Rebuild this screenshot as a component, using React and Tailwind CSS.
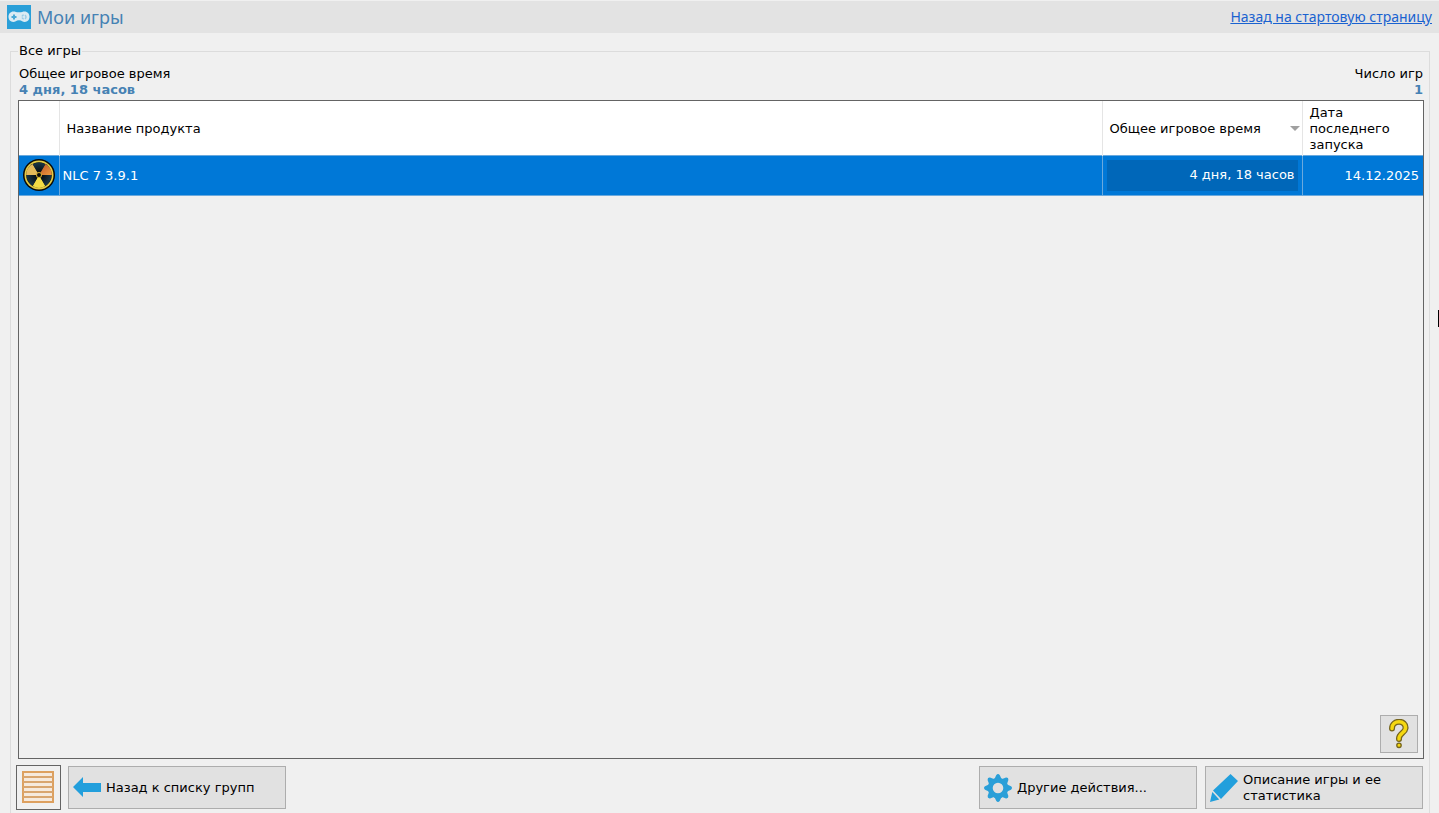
import React from 'react'

const games = [
    { id: 1, name: 'NLC 7 3.9.1', playtime: '4 дня, 18 часов', lastRun: '14.12.2025' },
]

const GamepadIcon = () => (
    <svg viewBox="0 0 24 24" className="h-6 w-6 shrink-0" aria-hidden="true">
        <rect width="24" height="24" fill="#2a9fd8" />
        <path d="M6.5 6.5c2 0 2.500.8 5.500.8s3.500-.8 5.500-.8c3 0 5 2.300 5 5.300s-2 5.200-4.700 5.200c-2.300 0-2.800-1.800-5.800-1.800s-3.500 1.800-5.800 1.800c-2.700 0-4.700-2.200-4.700-5.200s2-5.300 5-5.300z" fill="#dcebf3" />
        <path d="M7 9.500v5M4.500 12h5" stroke="#4aa9d6" strokeWidth="2" />
        <circle cx="17" cy="12" r="2" fill="none" stroke="#9ccde6" strokeWidth="1.500" strokeDasharray="2 1.100" />
    </svg>
)

const RadiationIcon = () => (
    <svg viewBox="0 0 32 32" className="mx-auto block h-8 w-8" aria-hidden="true">
        <defs>
            <radialGradient id="blade" gradientUnits="userSpaceOnUse" cx="16" cy="16" r="14">
                <stop offset="0" stopColor="#000" />
                <stop offset="1" stopColor="#1d3d50" />
            </radialGradient>
            <linearGradient id="flame" x1="0" y1="0" x2="1" y2="1">
                <stop offset="0" stopColor="#b9522a" />
                <stop offset="1" stopColor="#ee9a3c" />
            </linearGradient>
        </defs>
        <circle cx="16" cy="16" r="16" fill="#0a0a08" />
        <circle cx="16" cy="16" r="14.500" fill="#e3cb42" />
        <circle cx="16" cy="16" r="12.800" fill="#1a1a10" />
        <path d="M16 16L22.400 4.900A12.800 12.800 0 0 1 28.800 16z" fill="url(#flame)" />
        <path d="M16 16H3.200A12.800 12.800 0 0 1 9.600 4.900z" fill="#e3b95a" />
        <path d="M16 16L22.400 27.100A12.800 12.800 0 0 1 9.600 27.100z" fill="#f3dc45" />
        <path d="M16 16L9.800 5.300A12.400 12.400 0 0 1 22.200 5.300zM16 16H28.400A12.400 12.400 0 0 1 22.200 26.700zM16 16L9.800 26.700A12.400 12.400 0 0 1 3.600 16z" fill="url(#blade)" />
        <circle cx="16" cy="16" r="3" fill="#c9a52e" />
        <circle cx="16" cy="16" r="2" fill="#0a0a08" />
    </svg>
)

const ListIcon = () => (
    <svg viewBox="0 0 32 32" className="h-8 w-8" aria-hidden="true">
        <rect x="1" y="1" width="30" height="30" fill="#f6e9dc" stroke="#dda05f" strokeWidth="2" />
        <path d="M1 6h30M1 11h30M1 16h30M1 21h30M1 26h30" stroke="#d9a56e" strokeWidth="2" />
    </svg>
)

const ArrowIcon = () => (
    <svg viewBox="0 0 28 28" className="h-7 w-7 shrink-0" aria-hidden="true">
        <path d="M0 13L10 3v6h18v9H10v5z" fill="#229fdc" />
    </svg>
)

const GearIcon = () => (
    <svg viewBox="0 0 28 28" className="h-7 w-7 shrink-0" aria-hidden="true">
        <g fill="#2a9fd8">
            {[0, 45, 90, 135, 180, 225, 270, 315].map((angle) => (
                <path key={angle} d="M10 6L12.300 1Q14-1 15.700 1L18 6z" transform={`rotate(${angle} 14 14)`} />
            ))}
        </g>
        <circle cx="14" cy="14" r="7.800" fill="none" stroke="#2a9fd8" strokeWidth="5" />
    </svg>
)

const PencilIcon = () => (
    <svg viewBox="0 0 28 28" className="h-7 w-7 shrink-0" aria-hidden="true">
        <path d="M20.500 0L28 7 11 25 3 16.500zM2.300 18L9.300 25.500 0 28z" fill="#229fdc" />
    </svg>
)

const QuestionIcon = () => (
    <svg viewBox="0 0 30 30" className="h-[30px] w-[30px]" aria-hidden="true">
        <g fill="none" strokeLinecap="round" strokeLinejoin="round">
            <path d="M8 9.500C8 .5 22.500 .5 21.500 9.500C21 14 14.500 14.500 15 20" stroke="#75641c" strokeWidth="6" />
            <path d="M8 9.500C8 .5 22.500 .5 21.500 9.500C21 14 14.500 14.500 15 20" stroke="#f5d810" strokeWidth="3.500" />
        </g>
        <circle cx="15" cy="26.300" r="2.200" fill="#f5d810" stroke="#75641c" strokeWidth="1.300" />
    </svg>
)

const ActionButton = ({ icon, children }) => (
    <button type="button" className="flex h-[43px] w-[218px] items-center gap-[5px] border border-[#adadad] bg-[#e1e1e1] px-1 text-left">
        {icon}
        <span>{children}</span>
    </button>
)

export default function App() {
    return (
        <div className="relative flex h-screen flex-col overflow-hidden bg-[#f0f0f0] font-['Verdana','DejaVu_Sans',sans-serif] text-[13px] leading-4 text-black">
            <header className="flex h-[33px] shrink-0 items-center justify-between border-t border-[#f0f0f0] bg-[#e3e3e3] px-[7px] font-['Segoe_UI','Noto_Sans',sans-serif]">
                <div className="flex items-center gap-1.5">
                    <GamepadIcon />
                    <h1 className="text-[18px] leading-6 text-[#4682b4]">Мои игры</h1>
                </div>
                <a href="#" className="text-[14px] leading-5 text-[#1a62d0] underline">Назад на стартовую страницу</a>
            </header>

            <fieldset className="mt-[10px] mr-[9px] ml-[10px] flex min-h-0 flex-1 flex-col border border-b-0 border-[#dcdcdc] pr-[5px] pb-[3px] pl-[7px]">
                <legend className="px-px">Все игры</legend>

                <div className="mt-[7px] flex justify-between px-px">
                    <div>
                        <p>Общее игровое время</p>
                        <p className="font-bold text-[#4682b4]">4 дня, 18 часов</p>
                    </div>
                    <div className="text-right">
                        <p>Число игр</p>
                        <p className="font-bold text-[#4682b4]">1</p>
                    </div>
                </div>

                <div className="relative mt-[2px] min-h-0 flex-1 border border-[#646464]">
                    <table className="w-full table-fixed border-collapse">
                        <colgroup>
                            <col className="w-10" />
                            <col />
                            <col className="w-[200px]" />
                            <col className="w-[121px]" />
                        </colgroup>
                        <thead>
                            <tr className="h-[54px] bg-white text-left">
                                <th className="border-r border-[#e5e5e5] font-normal" aria-label="Значок"></th>
                                <th className="border-r border-[#e5e5e5] px-[7px] pt-[2px] font-normal">Название продукта</th>
                                <th className="border-r border-[#e5e5e5] pt-[2px] pr-[2px] pl-[7px] font-normal">
                                    <div className="flex items-center justify-between">
                                        <span>Общее игровое время</span>
                                        <svg viewBox="0 0 10 5" className="h-[5px] w-[10px]" aria-hidden="true">
                                            <path d="M0 0h10L5 5z" fill="#a0a0a0" />
                                        </svg>
                                    </div>
                                </th>
                                <th className="px-[7px] pt-[2px] font-normal">Дата последнего запуска</th>
                            </tr>
                        </thead>
                        <tbody>
                            {games.map((game) => (
                                <tr key={game.id} className="h-10 border-y border-[#6aa9dd] bg-[#0078d7] text-white">
                                    <td className="border-r border-[#6aa9dd]"><RadiationIcon /></td>
                                    <td className="border-r border-[#6aa9dd] px-[3px] pt-[2px]">{game.name}</td>
                                    <td className="border-r border-[#6aa9dd] px-1">
                                        <div className="flex h-[31px] items-center justify-end bg-[#0067b9] px-[3px]">{game.playtime}</div>
                                    </td>
                                    <td className="px-1 pt-[2px] text-right">{game.lastRun}</td>
                                </tr>
                            ))}
                        </tbody>
                    </table>

                    <button type="button" aria-label="Справка" className="absolute right-[5px] bottom-[5px] flex h-[38px] w-[38px] items-center justify-center border border-[#adadad] bg-[#e1e1e1]">
                        <QuestionIcon />
                    </button>
                </div>

                <div className="mt-1.5 flex items-center justify-between pr-px">
                    <div className="-ml-0.5 flex items-center gap-[7px]">
                        <button type="button" aria-label="Список" className="flex h-[45px] w-[45px] items-start border border-[#646464] p-[5px]">
                            <ListIcon />
                        </button>
                        <ActionButton icon={<ArrowIcon />}>Назад к списку групп</ActionButton>
                    </div>
                    <div className="flex items-center gap-2">
                        <ActionButton icon={<GearIcon />}>Другие действия...</ActionButton>
                        <ActionButton icon={<PencilIcon />}>Описание игры и ее статистика</ActionButton>
                    </div>
                </div>
            </fieldset>

            {/* edge of the mouse pointer */}
            <div className="absolute top-[310px] right-0 h-[17px] w-px bg-black" />
        </div>
    )
}
